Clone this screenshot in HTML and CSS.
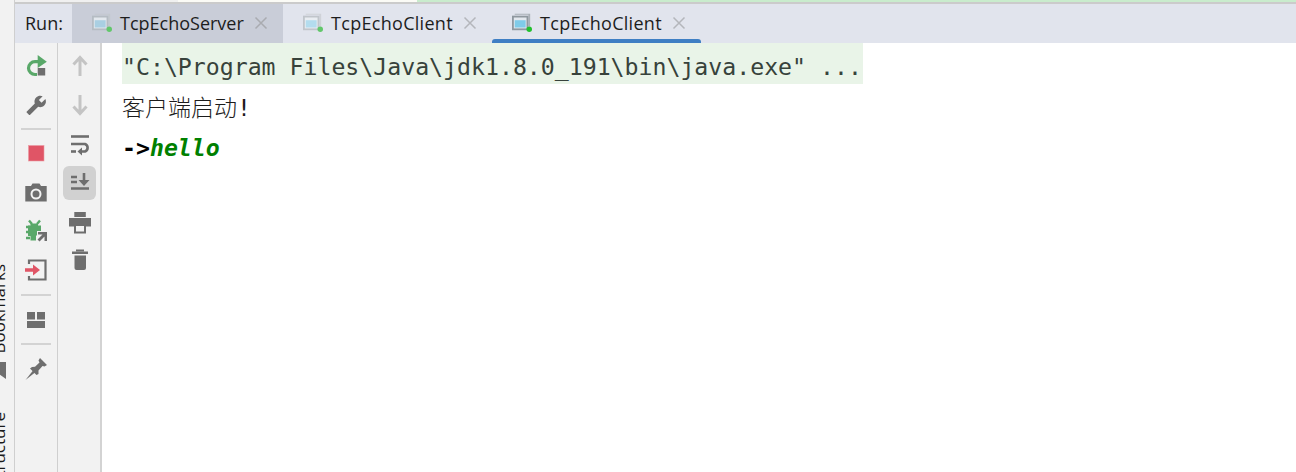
FILE: index.html
```html
<!DOCTYPE html>
<html lang="zh">
<head>
<meta charset="utf-8">
<title>Run</title>
<link rel="stylesheet" href="styles.css">
</head>
<body>
<div class="app">
  <aside class="stripe">
    <span class="stripe-label stripe-bookmarks">Bookmarks</span>
    <svg class="stripe-flag" width="8" height="18" viewBox="0 0 8 18"><path d="M0 0H7V17L0 12Z" fill="#6e6e6e"/></svg>
    <span class="stripe-label stripe-structure">Structure</span>
  </aside>
  <div class="main">
    <div class="topline">
      <div class="seg seg-grey"></div>
      <div class="seg seg-white"></div>
      <div class="seg seg-green"></div>
    </div>
    <div class="tabbar">
      <span class="run-label">Run:</span>
      <div class="tab tab-selected">
        <svg class="tab-icon" width="20" height="21" viewBox="0 0 22 21"><path d="M3 2V1H20V15H18V2Z" fill="#c3c8ce"/><rect x="1" y="4" width="16" height="14" fill="#e3e8ee" stroke="#b5bcc3" stroke-width="2"/><rect x="3" y="8" width="12" height="8" fill="#a9cfe2"/><circle cx="19" cy="18" r="3" fill="#62c76b"/></svg>
        <span class="tab-title">TcpEchoServer</span>
        <svg class="tab-close" width="16" height="16" viewBox="0 0 16 16"><path d="M2.500 2.500L13.500 13.500M13.500 2.500L2.500 13.500" stroke="#a9abb0" stroke-width="1.500"/></svg>
      </div>
      <div class="tab">
        <svg class="tab-icon" width="20" height="21" viewBox="0 0 22 21"><path d="M3 2V1H20V15H18V2Z" fill="#cfd2d8"/><rect x="1" y="4" width="16" height="14" fill="#e9edf2" stroke="#c0c5cb" stroke-width="2"/><rect x="3" y="8" width="12" height="8" fill="#b3dcee"/><circle cx="19" cy="18" r="3" fill="#62c76b"/></svg>
        <span class="tab-title">TcpEchoClient</span>
        <svg class="tab-close" width="16" height="16" viewBox="0 0 16 16"><path d="M2.500 2.500L13.500 13.500M13.500 2.500L2.500 13.500" stroke="#b4b6bb" stroke-width="1.500"/></svg>
      </div>
      <div class="tab tab-active">
        <svg class="tab-icon" width="20" height="21" viewBox="0 0 22 21"><path d="M3 2V1H20V15H18V2Z" fill="#a9b0b6"/><rect x="1" y="4" width="16" height="14" fill="#e3e8ee" stroke="#8f989f" stroke-width="2"/><rect x="3" y="8" width="12" height="8" fill="#7fcbe8"/><circle cx="19" cy="18" r="3" fill="#22c02e"/></svg>
        <span class="tab-title">TcpEchoClient</span>
        <svg class="tab-close" width="16" height="16" viewBox="0 0 16 16"><path d="M2.500 2.500L13.500 13.500M13.500 2.500L2.500 13.500" stroke="#b4b6bb" stroke-width="1.500"/></svg>
      </div>
    </div>
    <div class="body">
      <div class="tools tools-run">
        <div class="tool"><svg width="24" height="24" viewBox="0 0 24 24"><path d="M14 7.700H11A6.500 6.500 0 0 0 4.500 14.200A6.500 6.500 0 0 0 11 20.500H13" fill="none" stroke="#59a869" stroke-width="3.200"/><path d="M13.700 1L22.800 7.700L13.700 14Z" fill="#59a869"/><rect x="13.700" y="14" width="7.500" height="7.500" fill="#6e6e6e"/></svg></div>
        <div class="tool"><svg width="24" height="24" viewBox="0 0 24 24"><path transform="matrix(-.88 0 0 .88 22.800 1.800)" d="M22.700 19l-9.100-9.100c.9-2.300.4-5-1.500-6.900-2-2-5-2.400-7.400-1.300L9 6 6 9 1.600 4.700C.4 7.100.9 10.100 2.900 12.100c1.900 1.900 4.600 2.400 6.900 1.500l9.100 9.100c.4.4 1 .4 1.400 0l2.300-2.300c.5-.4.500-1.100.100-1.400z" fill="#6e6e6e"/></svg></div>
        <div class="sep sep-tight"></div>
        <div class="tool"><svg width="24" height="24" viewBox="0 0 24 24"><rect x="4.500" y="4.500" width="15.500" height="15.500" fill="#e05566" stroke="#eb9aa2" stroke-width=".6"/></svg></div>
        <div class="tool"><svg width="24" height="24" viewBox="0 0 24 24"><path d="M1.300 6H7L8.500 3.500H15.500L17 6H22.700V21.500H1.300Z" fill="#6e6e6e"/><circle cx="12" cy="14" r="4.500" fill="#6e6e6e" stroke="#f2f2f2" stroke-width="2"/></svg></div>
        <div class="tool"><svg width="24" height="24" viewBox="0 0 24 24"><path d="M5 1.500L8 5M16 1.500L13 5M2 8H6M2 13H6M2 19H6" fill="none" stroke="#59a869" stroke-width="2.400"/><path d="M6.500 4.500H14V6.500H17V12H13V16.500H12V21.500H6.500V17H4V6.500H6.500Z" fill="#59a869"/><path d="M14 13H23V22H20.500V17.500L15.500 22.500L13.500 20.500L18.500 15.500H14Z" fill="#6e6e6e"/></svg></div>
        <div class="tool"><svg width="24" height="24" viewBox="0 0 24 24"><path d="M5 6V2.500H21.500V21.500H5V18" fill="none" stroke="#6e6e6e" stroke-width="2.200"/><path d="M1 10.300H9V6.500L16 12L9 17.500V13.700H1Z" fill="#e05566"/></svg></div>
        <div class="sep sep-wide"></div>
        <div class="tool"><svg width="24" height="24" viewBox="0 0 24 24"><rect x="3" y="4" width="8" height="7.500" fill="#6e6e6e"/><rect x="13" y="4" width="8" height="7.500" fill="#6e6e6e"/><rect x="3" y="13" width="18" height="7" fill="#6e6e6e"/></svg></div>
        <div class="sep"></div>
        <div class="tool"><svg width="24" height="24" viewBox="0 0 24 24"><path d="M16 1L23 8L20.500 9.500L18.500 9L14.500 13.500L14.500 17L12.500 18L6 11.500L8 10L11 9.800L15.500 5.500L14.500 3.500Z" fill="#6e6e6e"/><path d="M9 13.500L1.500 23L11 15.500Z" fill="#6e6e6e"/></svg></div>
      </div>
      <div class="tools tools-console">
        <div class="tool"><svg width="24" height="24" viewBox="0 0 24 24"><path d="M12 22V4M5.500 10.500L12 3.500L18.500 10.500" fill="none" stroke="#c4c4c4" stroke-width="3"/></svg></div>
        <div class="tool"><svg width="24" height="24" viewBox="0 0 24 24"><path d="M12 2V20M5.500 13.500L12 20.500L18.500 13.500" fill="none" stroke="#c4c4c4" stroke-width="3"/></svg></div>
        <div class="tool tool-wrap"><svg width="24" height="24" viewBox="0 0 24 24"><path d="M3 3.500H21" stroke="#6e6e6e" stroke-width="2.600"/><path d="M3 11H17A4 4 0 0 1 17 18.500H12" fill="none" stroke="#6e6e6e" stroke-width="2.600"/><path d="M3 18.500H8" stroke="#6e6e6e" stroke-width="2.600"/><path d="M14 14.500V22.500L9.500 18.500Z" fill="#6e6e6e"/></svg></div>
        <div class="tool tool-on"><svg width="24" height="24" viewBox="0 0 24 24"><path d="M3 6H9M3 11H9M3 17.500H21" stroke="#6e6e6e" stroke-width="2.400"/><path d="M16 2V10" stroke="#6e6e6e" stroke-width="2.600"/><path d="M10.500 9H21.500L16 15Z" fill="#6e6e6e"/></svg></div>
        <div class="tool tool-short"><svg width="24" height="24" viewBox="0 0 24 24"><rect x="6.300" y="2" width="11.500" height="5" fill="#6e6e6e"/><path d="M1 8H23V16.500H18V14H6V16.500H1Z" fill="#6e6e6e"/><path d="M7 15H17V22.500H7Z" fill="#f2f2f2" stroke="#6e6e6e" stroke-width="2"/></svg></div>
        <div class="tool tool-last"><svg width="24" height="24" viewBox="0 0 24 24"><rect x="8" y="1.500" width="8" height="2" fill="#6e6e6e"/><rect x="4" y="3.500" width="16" height="2.500" fill="#6e6e6e"/><path d="M6.500 7.500H18V20A2 2 0 0 1 16 22H8.500A2 2 0 0 1 6.500 20Z" fill="#6e6e6e"/></svg></div>
      </div>
      <div class="console">
        <div class="line"><span class="cmd">"C:\Program Files\Java\jdk1.8.0_191\bin\java.exe" ...</span></div>
        <div class="line line-cjk"><span class="cjk">客户端启动</span>!</div>
        <div class="line"><span class="prompt">-&gt;</span><span class="input">hello</span></div>
      </div>
    </div>
  </div>
</div>
</body>
</html>
```
FILE: styles.css
```css
* { box-sizing: border-box; }
html, body { margin: 0; padding: 0; }
body { width: 1296px; height: 472px; overflow: hidden; background: #fff; }
.app { display: flex; width: 1296px; height: 472px; overflow: hidden; }

.stripe {
  flex: 0 0 15px;
  background: #f2f2f2;
  border-right: 1px solid #cfcfcf;
  display: flex;
  flex-direction: column;
  align-items: flex-end;
  overflow: hidden;
  padding-right: 7px;
}
.stripe-label {
  writing-mode: vertical-rl;
  transform: rotate(180deg);
  font: 17px/16px "Open Sans", "Noto Sans", sans-serif;
  color: #1a1a1a;
  white-space: nowrap;
  flex: none;
  width: 16px;
}
.stripe-bookmarks { margin-top: 264px; }
.stripe-flag { flex: none; margin-top: 8px; }
.stripe-structure { margin-top: 32px; }

.main { flex: 1; display: flex; flex-direction: column; min-width: 0; }
.topline { display: flex; height: 4px; border-bottom: 2px solid #cbcbcb; flex: none; }
.seg { height: 2px; }
.seg-grey { width: 163px; background: #f0f0f0; }
.seg-white { width: 239px; background: #fbfbf6; }
.seg-green { flex: 1; background: #c9eccd; }

.tabbar {
  flex: none;
  height: 39px;
  display: flex;
  align-items: stretch;
  background: #e1e4ed;
  font: 18px/1 "Open Sans", "Noto Sans", sans-serif;
  color: #1d1d1d;
}
.run-label { width: 57px; padding: 0 0 2px 10px; display: flex; align-items: center; }
.tab {
  display: flex;
  align-items: center;
  padding: 0 14px 2px 20px;
  position: relative;
}
.tab-selected { background: #c9cdd8; }
.tab-active::after {
  content: "";
  position: absolute;
  left: 0;
  right: 0;
  bottom: 0;
  height: 4px;
  background: #3f7fc4;
  border-radius: 3px 3px 0 0;
}
.tab-icon { flex: none; margin-right: 8px; }
.tab-title { white-space: nowrap; width: 125px; }
.tab + .tab .tab-title { width: 123px; letter-spacing: .3px; }
.tab-close { flex: none; margin-left: 8px; }

.body { flex: 1; display: flex; min-height: 0; }
.tools {
  flex: none;
  background: #f2f2f2;
  display: flex;
  flex-direction: column;
  align-items: center;
  padding-top: 3px;
}
.tools-run { width: 43px; border-right: 1px solid #cfcfcf; }
.tools-console { width: 44px; border-right: 2px solid #d3d3d3; }
.tools-console svg { margin-left: 2px; }
.tool {
  height: 39px;
  width: 33px;
  display: flex;
  align-items: center;
  justify-content: center;
  flex: none;
  border-radius: 6px;
}
.tool-wrap { margin-top: 1px; }
.tool-on { background: #d1d1d1; height: 34px; margin-top: 2px; }
.tool-short { height: 38px; margin-top: 3px; }
.tool-last { height: 38px; }
.sep { height: 10px; width: 30px; flex: none; display: flex; align-items: center; }
.sep::before { content: ""; display: block; width: 100%; height: 2px; background: #d3d3d3; }
.sep-tight { height: 9px; }
.sep-wide { height: 11px; }

.console {
  flex: 1;
  background: #fff;
  padding-left: 20px;
  font: 23.200px/47px "DejaVu Sans Mono", "Liberation Mono", monospace;
  color: #1c1c1c;
}
.line { height: 40px; white-space: pre; }
.line:first-child { height: 41px; }
.line-cjk { line-height: 44px; }
.cmd { display: inline-block; height: 41px; padding-right: 1px; background: #e9f4e8; color: #37423b; }
.cjk { font-family: "Noto Sans CJK SC", sans-serif; font-size: 23px; font-weight: 300; }
.prompt { font-weight: 700; color: #000; }
.input { font-weight: 700; font-style: italic; color: #008000; }
```
